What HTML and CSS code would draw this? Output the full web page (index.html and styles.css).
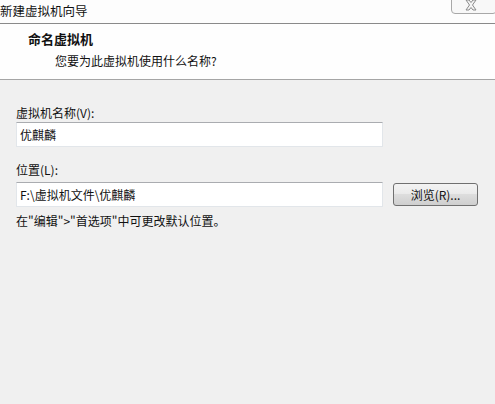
FILE: index.html
```html
<!DOCTYPE html>
<html lang="zh-CN">
<head>
  <meta charset="UTF-8" />
  <title>新建虚拟机向导</title>
  <link rel="stylesheet" href="styles.css">
</head>
<body>
  <div class="titlebar">
    <span class="title">新建虚拟机向导</span>
    <span class="close-btn">
      <svg width="12" height="11" viewBox="0 0 12 11">
        <path d="M1 0 L4 0 L6 2.5 L8 0 L11 0 L7.5 5 L11 10 L8 10 L6 7.5 L4 10 L1 10 L4.5 5 Z" fill="#f4f4f4" stroke="#8a8a8a" stroke-width="1"/>
      </svg>
    </span>
  </div>

  <div class="header">
    <div class="header-title">命名虚拟机</div>
    <div class="header-sub">您要为此虚拟机使用什么名称?</div>
  </div>

  <div class="content">
    <div class="label label-name">虚拟机名称(V):</div>
    <div class="field">优麒麟</div>

    <div class="label label-path">位置(L):</div>
    <div class="row">
      <div class="field">F:\虚拟机文件\优麒麟</div>
      <button class="btn">浏览(R)...</button>
    </div>

    <div class="hint">在"编辑">"首选项"中可更改默认位置。</div>
  </div>
</body>
</html>
```

FILE: styles.css
```css
body {
  margin: 0;
  padding: 0;
  background: #f0f0f0;
  color: #111;
  font-family: "Noto Sans CJK SC", "Liberation Sans", sans-serif;
  font-size: 12px;
  height: 404px;
  overflow: hidden;
}

.titlebar {
  position: relative;
  height: 23px;
  line-height: 22px;
  background: #fdfdfd;
  border-bottom: 1px solid #8a8a8a;
  font-size: 12.5px;
}

.close-btn {
  position: absolute;
  top: -1px;
  right: -2px;
  width: 38px;
  height: 13px;
  border: 1px solid #a8a8a8;
  border-radius: 0 0 4px 4px;
  background: #f8f8f8;
  display: flex;
  justify-content: center;
  align-items: flex-start;
  padding-right: 6px;
}

.close-btn svg {
  display: block;
}

.header {
  height: 56px;
  background: #fefefe;
  border-bottom: 1px solid #a5a5a5;
  box-sizing: border-box;
  padding: 7px 0 0 28px;
}

.header-title {
  font-weight: bold;
  font-size: 13px;
  line-height: 16px;
}

.header-sub {
  margin: 6px 0 0 27px;
  line-height: 16px;
}

.content {
  padding: 25px 0 0 16px;
}

.label {
  line-height: 16px;
}

.field {
  width: 367px;
  height: 25px;
  box-sizing: border-box;
  background: #fff;
  border: 1px solid #e2e6ea;
  border-top-color: #aaacb0;
  padding: 0 0 0 3px;
  line-height: 23px;
  margin-top: 1px;
}

.label-path {
  margin-top: 15px;
}

.row {
  display: flex;
  align-items: center;
  gap: 10px;
  margin-top: 4px;
}

.row .field {
  margin-top: 0;
}

.btn {
  width: 85px;
  height: 23px;
  border: 1px solid #707070;
  border-radius: 3px;
  background: linear-gradient(#f3f3f3 0%, #ebebeb 45%, #dddddd 50%, #cfcfcf 100%);
  font-family: inherit;
  font-size: 12px;
  color: #111;
  padding: 0;
}

.hint {
  margin-top: 6px;
  line-height: 16px;
}
```
